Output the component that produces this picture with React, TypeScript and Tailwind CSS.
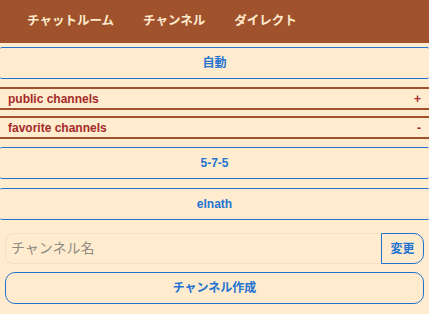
export default function App() {
  const font = { fontFamily: '"Liberation Sans", "Noto Sans CJK JP", sans-serif' }
  return (
    <div className="w-[429px] h-[314px] bg-[#ffebcd] overflow-hidden" style={font}>
      <nav className="h-[43px] bg-[#a0522d] flex items-center pl-[27px] gap-[29px] text-[12.5px] font-bold text-[#ffebcd]">
        <span>チャットルーム</span>
        <span>チャンネル</span>
        <span>ダイレクト</span>
      </nav>
      <div className="flex flex-col pt-[4px]">
        <button className="h-[32px] border-y border-[#2373d3] rounded-[2px] text-[12px] font-bold text-[#2373d3]">
          自動
        </button>
        <div className="mt-[8px] h-[23px] border-y-2 border-[#a0522d] flex items-center justify-between px-[8px] text-[12px] font-bold text-[#a52a2a]">
          <span>public channels</span>
          <span>+</span>
        </div>
        <div className="mt-[6px] h-[23px] border-y-2 border-[#a0522d] flex items-center justify-between px-[8px] text-[12px] font-bold text-[#a52a2a]">
          <span>favorite channels</span>
          <span>-</span>
        </div>
        <button className="mt-[8px] h-[32px] border-y border-[#2373d3] rounded-[2px] text-[12px] font-bold text-[#2373d3]">
          5-7-5
        </button>
        <button className="mt-[9px] h-[32px] border-y border-[#2373d3] rounded-[2px] text-[12px] font-bold text-[#2373d3]">
          elnath
        </button>
        <div className="mt-[13px] mx-[5px] flex h-[31px]">
          <input
            className="flex-1 min-w-0 border border-r-0 border-[#f5dfc0] rounded-l-[8px] bg-transparent px-[5px] text-[14px] placeholder:text-[#8f8b85] outline-none"
            placeholder="チャンネル名"
          />
          <button className="relative w-[43px] border border-solid border-[#2373d3] rounded-r-[10px] text-[12px] font-bold text-[#2373d3]">
            変更
          </button>
        </div>
        <button className="mt-[8px] mx-[5px] h-[32px] border border-[#2373d3] rounded-[10px] text-[12px] font-bold text-[#2373d3]">
          チャンネル作成
        </button>
      </div>
    </div>
  )
}
